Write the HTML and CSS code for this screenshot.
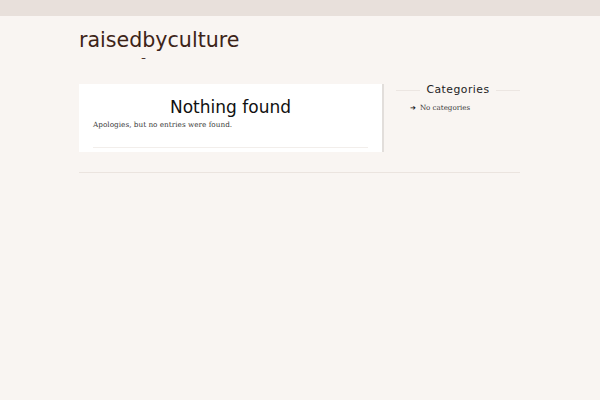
FILE: index.html
```html
<!DOCTYPE html>
<html lang="en">
<head>
  <meta charset="UTF-8" />
  <title>raisedbyculture</title>
  <link rel="stylesheet" href="styles.css">
</head>
<body>

<div class="topbar"></div>

<div class="wrap">
  <header class="site-head">
    <div class="site-title">raisedbyculture</div>
    <div class="site-desc"><span>-</span></div>
  </header>

  <div class="main">
    <div class="content">
      <div class="card">
        <h1>Nothing found</h1>
        <p>Apologies, but no entries were found.</p>
      </div>
    </div>

    <aside class="sidebar">
      <h3 class="widget-title"><span>Categories</span></h3>
      <ul>
        <li>No categories</li>
      </ul>
    </aside>
  </div>

  <div class="footer-line"></div>
</div>

</body>
</html>
```

FILE: styles.css
```css
* { box-sizing: border-box; }
body {
  margin: 0;
  background: #f9f5f2;
  font-family: 'DejaVu Sans', sans-serif;
  color: #333;
}
.topbar {
  height: 16px;
  background: #e8e0db;
}
.wrap {
  width: 441px;
  margin-left: 79px;
}
.site-head { padding-top: 13px; height: 68px; }
.site-title {
  font-size: 20.6px;
  color: #3d2418;
  line-height: 22px;
}
.site-desc {
  font-size: 10px;
  color: #3d2418;
  line-height: 10px;
  margin: 2px 0 0 62px;
}
.site-desc span {
  display: inline-block;
  transform: scaleX(1.4);
  transform-origin: left center;
}
.main {
  display: flex;
  align-items: flex-start;
}
.content { width: 305px; }
.card {
  background: #fff;
  width: 303px;
  box-shadow: 2px 0 0 #e2dedb;
  padding: 12px 14px 4px;
}
.card h1 {
  margin: 0;
  font-weight: normal;
  font-size: 17px;
  line-height: 22px;
  text-align: center;
  color: #111;
}
.card p {
  margin: 1px 0 0;
  font-family: 'DejaVu Serif', serif;
  font-size: 7.3px;
  line-height: 12px;
  color: #3a3a3a;
  padding-bottom: 16px;
  border-bottom: 1px solid #f2eeeb;
}
.sidebar {
  margin-left: 12px;
  width: 124px;
}
.widget-title {
  margin: 0;
  font-weight: normal;
  font-size: 10.8px;
  letter-spacing: 0.5px;
  color: #222;
  display: flex;
  align-items: center;
  gap: 6px;
  line-height: 12px;
}
.widget-title::before,
.widget-title::after {
  content: "";
  flex: 1;
  border-top: 1px solid #ece6e2;
}
.sidebar ul {
  list-style: none;
  margin: 6px 0 0;
  padding: 0 0 0 14px;
}
.sidebar li {
  font-family: 'DejaVu Serif', serif;
  font-size: 7.1px;
  color: #3a3a3a;
  line-height: 12px;
}
.sidebar li::before {
  content: "\2794";
  font-family: 'DejaVu Sans', sans-serif;
  font-size: 7px;
  font-weight: bold;
  color: #111;
  margin-right: 4px;
}
.footer-line {
  margin-top: 20px;
  border-top: 1px solid #ebe4df;
}
```
